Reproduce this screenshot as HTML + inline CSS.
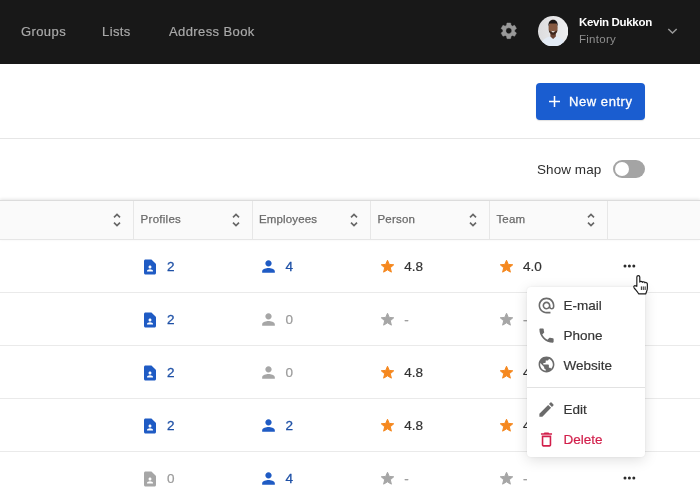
<!DOCTYPE html>
<html lang="en">
<head>
<meta charset="utf-8">
<title>Address Book</title>
<style>
*{box-sizing:border-box;margin:0;padding:0}
html,body{width:700px;height:500px;overflow:hidden;background:#fff}
body{opacity:.9999;font-family:"Liberation Sans",sans-serif;color:#333;position:relative;-webkit-font-smoothing:antialiased}
.abs{position:absolute}
.t{position:absolute;white-space:nowrap;line-height:1}
nav{position:absolute;left:0;top:0;width:700px;height:64px;background:#181818}
nav .lnk{color:#a9a9a9;font-size:13px;top:25px;letter-spacing:.4px;-webkit-text-stroke:.2px #a9a9a9}
.btn{position:absolute;left:536px;top:83px;width:109px;height:37px;background:#1a5dd0;border-radius:4px;box-shadow:0 1px 1px rgba(0,0,0,.12)}
.btn span{position:absolute;color:#fff;font-size:13px;line-height:1;left:33px;top:11.500px;letter-spacing:.56px;white-space:nowrap;-webkit-text-stroke:.3px #fff}
.hr{position:absolute;left:0;width:700px;height:1px;background:#e6e6e6}
.thead{position:absolute;left:0;top:200px;width:700px;height:40px;background:#fafafa;border-top:1px solid #dcdcdc;border-bottom:1px solid #e6e6e6;box-shadow:0 -1px 3px rgba(0,0,0,.10)}
.vs{position:absolute;top:201px;width:1px;height:38px;background:#e7e7e7}
.th{color:#6a6a6a;font-size:11.5px;top:214.300px;letter-spacing:.15px;-webkit-text-stroke:.25px #6a6a6a}
.num{font-size:13.5px;color:#1f51a6;-webkit-text-stroke:.3px #1f51a6}
.num.g{color:#9a9a9a;-webkit-text-stroke:.2px #9a9a9a}
.num.d{color:#333;-webkit-text-stroke:.2px #333}
.menu{position:absolute;left:526.500px;top:287px;width:118.500px;height:170.400px;background:#fff;border-radius:4px;box-shadow:0 3px 14px rgba(0,0,0,.13),0 0 2px rgba(0,0,0,.08)}
.mi{font-size:13.5px;color:#363636;left:37px;letter-spacing:0;-webkit-text-stroke:.2px currentColor}
</style>
</head>
<body>
<nav>
  <span class="t lnk" style="left:21px">Groups</span>
  <span class="t lnk" style="left:102px">Lists</span>
  <span class="t lnk" style="left:169px">Address Book</span>
  <svg class="abs" style="left:498.700px;top:21.300px" width="19.600" height="19.600" viewBox="0 0 24 24"><path fill="#999" stroke="#999" stroke-width=".5" d="M19.14 12.94c.04-.3.06-.61.06-.94 0-.32-.02-.64-.07-.94l2.03-1.58a.49.49 0 0 0 .12-.61l-1.92-3.32a.488.488 0 0 0-.59-.22l-2.39.96c-.5-.38-1.03-.7-1.62-.94l-.36-2.54a.484.484 0 0 0-.48-.41h-3.84c-.24 0-.43.17-.47.41l-.36 2.54c-.59.24-1.13.57-1.62.94l-2.39-.96c-.22-.08-.47 0-.59.22L2.74 8.87c-.12.21-.08.47.12.61l2.03 1.58c-.05.3-.09.63-.09.94s.02.64.07.94l-2.03 1.58a.49.49 0 0 0-.12.61l1.92 3.32c.12.22.37.29.59.22l2.39-.96c.5.38 1.03.7 1.62.94l.36 2.54c.05.24.24.41.48.41h3.84c.24 0 .44-.17.47-.41l.36-2.54c.59-.24 1.13-.56 1.62-.94l2.39.96c.22.08.47 0 .59-.22l1.92-3.32c.12-.22.07-.47-.12-.61l-2.01-1.58zM12 15.6c-1.98 0-3.600-1.62-3.600-3.600s1.620-3.600 3.600-3.600 3.600 1.620 3.600 3.600-1.620 3.600-3.600 3.600z"/></svg>
  <svg class="abs" style="left:538px;top:16px" width="30.400" height="30.400" viewBox="0 0 30 30">
    <defs><clipPath id="av"><circle cx="15" cy="15" r="15"/></clipPath>
    <linearGradient id="avbg" x1="0" x2="1"><stop offset="0" stop-color="#dcdcde"/><stop offset="1" stop-color="#efeff0"/></linearGradient>
    <filter id="avb" x="-10%" y="-10%" width="120%" height="120%"><feGaussianBlur stdDeviation=".45"/></filter></defs>
    <g clip-path="url(#av)">
      <rect width="30" height="30" fill="url(#avbg)"/>
      <g filter="url(#avb)">
      <path d="M2.500 31c.3-6 3.500-9.300 8.500-10.600l3.900-1.800 3.900 1.800c5 1.300 8.200 4.600 8.500 10.600z" fill="#e3ebf5"/>
      <path d="M12.200 17h5.400v3.200l-2.700 2.600-2.700-2.600z" fill="#6a4232"/>
      <ellipse cx="14.900" cy="11.600" rx="4.500" ry="6.300" fill="#85583f"/>
      <path d="M10.500 13c.2 3.600 2 5.400 4.400 5.400s4.200-1.800 4.400-5.400c-.7 1.500-1.400 2.100-2.100 2.200-1.100-.5-3.500-.5-4.600 0-.7-.1-1.400-.7-2.100-2.200z" fill="#3c261d"/>
      <path d="M10.300 10.800c-.4-4.600 1.600-7 4.600-7s5 2.400 4.600 7c-.3-2-.8-3-1.600-3.500-1 .3-5 .3-6 0-.8.500-1.300 1.500-1.600 3.500z" fill="#1b1412"/>
      <path d="M13.100 14.500q1.800.9 3.600 0q-.4 1.700-1.800 1.700t-1.800-1.700z" fill="#efe6e2"/>
      </g>
    </g>
  </svg>
  <span class="t" style="left:579px;top:16.900px;color:#fff;font-weight:bold;font-size:11.500px;letter-spacing:-.32px">Kevin Dukkon</span>
  <span class="t" style="left:579px;top:34.100px;color:#8e8e8e;font-size:11.500px;letter-spacing:.27px">Fintory</span>
  <svg class="abs" style="left:667.200px;top:27.200px" width="11" height="8" viewBox="0 0 11 8"><path d="M1.300 2l4.200 4 4.200-4" fill="none" stroke="#9a9a9a" stroke-width="1.500"/></svg>
</nav>

<div class="btn"><svg class="abs" style="left:13px;top:13px" width="11" height="11" viewBox="0 0 11 11"><path d="M5.500 0v11M0 5.500h11" stroke="#fff" stroke-width="1.500"/></svg><span>New entry</span></div>
<div class="hr" style="top:138px"></div>

<span class="t" style="left:537px;top:162.600px;font-size:13.500px;color:#2e2e2e;letter-spacing:.06px">Show map</span>
<div class="abs" style="left:613px;top:160px;width:32px;height:18px;border-radius:9px;background:#a4a4a4"></div>
<div class="abs" style="left:615px;top:162px;width:14px;height:14px;border-radius:7px;background:#fff"></div>

<div class="thead"></div>
<div class="vs" style="left:133px"></div>
<div class="vs" style="left:252px"></div>
<div class="vs" style="left:370px"></div>
<div class="vs" style="left:489px"></div>
<div class="vs" style="left:607px"></div>
<span class="t th" style="left:140.600px;letter-spacing:.27px">Profiles</span>
<span class="t th" style="left:259px;letter-spacing:.13px">Employees</span>
<span class="t th" style="left:377.500px;letter-spacing:.2px">Person</span>
<span class="t th" style="left:496.500px;letter-spacing:.12px">Team</span>
<div id="sorts">
<svg class="abs" style="left:111.6px;top:212.200px" width="10" height="16" viewBox="0 0 10 16"><path d="M2 5.300L5 2.400 8 5.300M2 10.700L5 13.600 8 10.700" fill="none" stroke="#666" stroke-width="1.650"/></svg>
<svg class="abs" style="left:230.6px;top:212.200px" width="10" height="16" viewBox="0 0 10 16"><path d="M2 5.300L5 2.400 8 5.300M2 10.700L5 13.600 8 10.700" fill="none" stroke="#666" stroke-width="1.650"/></svg>
<svg class="abs" style="left:348.6px;top:212.200px" width="10" height="16" viewBox="0 0 10 16"><path d="M2 5.300L5 2.400 8 5.300M2 10.700L5 13.600 8 10.700" fill="none" stroke="#666" stroke-width="1.650"/></svg>
<svg class="abs" style="left:467.6px;top:212.200px" width="10" height="16" viewBox="0 0 10 16"><path d="M2 5.300L5 2.400 8 5.300M2 10.700L5 13.600 8 10.700" fill="none" stroke="#666" stroke-width="1.650"/></svg>
<svg class="abs" style="left:585.6px;top:212.200px" width="10" height="16" viewBox="0 0 10 16"><path d="M2 5.300L5 2.400 8 5.300M2 10.700L5 13.600 8 10.700" fill="none" stroke="#666" stroke-width="1.650"/></svg>
</div><!--/sorts-->

<div class="hr" style="top:292.200px;background:#eaeaea"></div>
<div class="hr" style="top:345.250px;background:#eaeaea"></div>
<div class="hr" style="top:398.300px;background:#eaeaea"></div>
<div class="hr" style="top:451.350px;background:#eaeaea"></div>

<div id="rows">
<svg class="abs" style="left:140.7px;top:257.5px" width="18" height="18" viewBox="0 0 24 24"><path fill="#1f5bc4" d="M13.17 2H6c-1.100 0-2 .9-2 2v16c0 1.100.9 2 2 2h12c1.100 0 2-.9 2-2V8.830c0-.53-.21-1.040-.59-1.410l-4.830-4.830c-.37-.38-.88-.59-1.410-.59zM12 10c1.100 0 2 .9 2 2s-.9 2-2 2-2-.9-2-2 .9-2 2-2zm4 8H8v-.57c0-.81.48-1.530 1.220-1.850a6.950 6.950 0 0 1 5.560 0A2.010 2.010 0 0 1 16 17.430V18z"/></svg>
<span class="t num" style="left:167px;top:260px">2</span>
<svg class="abs" style="left:259px;top:256.9px" width="19" height="19" viewBox="0 0 24 24"><path fill="#1f5bc4" d="M12 12c2.210 0 4-1.790 4-4s-1.790-4-4-4-4 1.790-4 4 1.790 4 4 4zm0 2c-2.670 0-8 1.340-8 4v2h16v-2c0-2.660-5.330-4-8-4z"/></svg>
<span class="t num" style="left:285.500px;top:260px">4</span>
<svg class="abs" style="left:380px;top:259.2px" width="15" height="15" viewBox="0 0 24 24"><path fill="#f5881f" stroke="#f5881f" stroke-width="1.600" stroke-linejoin="round" d="M12 17.270L18.180 21l-1.640-7.030L22 9.240l-7.190-.61L12 2 9.190 8.630 2 9.240l5.460 4.730L5.820 21z"/></svg>
<span class="t num d" style="left:404.3px;top:260px">4.8</span>
<svg class="abs" style="left:498.7px;top:259.2px" width="15" height="15" viewBox="0 0 24 24"><path fill="#f5881f" stroke="#f5881f" stroke-width="1.600" stroke-linejoin="round" d="M12 17.270L18.180 21l-1.640-7.030L22 9.240l-7.190-.61L12 2 9.190 8.630 2 9.240l5.460 4.730L5.820 21z"/></svg>
<span class="t num d" style="left:523px;top:260px">4.0</span>
<svg class="abs" style="left:623.200px;top:264.2px" width="13" height="4" viewBox="0 0 13 4"><circle cx="2" cy="2" r="1.500" fill="#2b2b2b"/><circle cx="6.400" cy="2" r="1.500" fill="#2b2b2b"/><circle cx="10.800" cy="2" r="1.500" fill="#2b2b2b"/></svg>
<svg class="abs" style="left:140.7px;top:310.5px" width="18" height="18" viewBox="0 0 24 24"><path fill="#1f5bc4" d="M13.17 2H6c-1.100 0-2 .9-2 2v16c0 1.100.9 2 2 2h12c1.100 0 2-.9 2-2V8.830c0-.53-.21-1.040-.59-1.410l-4.830-4.830c-.37-.38-.88-.59-1.410-.59zM12 10c1.100 0 2 .9 2 2s-.9 2-2 2-2-.9-2-2 .9-2 2-2zm4 8H8v-.57c0-.81.48-1.530 1.220-1.850a6.950 6.950 0 0 1 5.560 0A2.010 2.010 0 0 1 16 17.430V18z"/></svg>
<span class="t num" style="left:167px;top:313px">2</span>
<svg class="abs" style="left:259px;top:309.9px" width="19" height="19" viewBox="0 0 24 24"><path fill="#a6a6a6" d="M12 12c2.210 0 4-1.790 4-4s-1.790-4-4-4-4 1.790-4 4 1.790 4 4 4zm0 2c-2.670 0-8 1.340-8 4v2h16v-2c0-2.660-5.330-4-8-4z"/></svg>
<span class="t num g" style="left:285.500px;top:313px">0</span>
<svg class="abs" style="left:380px;top:312.2px" width="15" height="15" viewBox="0 0 24 24"><path fill="#a6a6a6" stroke="#a6a6a6" stroke-width="1.600" stroke-linejoin="round" d="M12 17.270L18.180 21l-1.640-7.030L22 9.240l-7.190-.61L12 2 9.190 8.630 2 9.240l5.460 4.730L5.820 21z"/></svg>
<span class="t num g" style="left:404.3px;top:313px">-</span>
<svg class="abs" style="left:498.7px;top:312.2px" width="15" height="15" viewBox="0 0 24 24"><path fill="#a6a6a6" stroke="#a6a6a6" stroke-width="1.600" stroke-linejoin="round" d="M12 17.270L18.180 21l-1.640-7.030L22 9.240l-7.190-.61L12 2 9.190 8.630 2 9.240l5.460 4.730L5.820 21z"/></svg>
<span class="t num g" style="left:523px;top:313px">-</span>
<svg class="abs" style="left:140.7px;top:363.5px" width="18" height="18" viewBox="0 0 24 24"><path fill="#1f5bc4" d="M13.17 2H6c-1.100 0-2 .9-2 2v16c0 1.100.9 2 2 2h12c1.100 0 2-.9 2-2V8.830c0-.53-.21-1.040-.59-1.410l-4.830-4.830c-.37-.38-.88-.59-1.410-.59zM12 10c1.100 0 2 .9 2 2s-.9 2-2 2-2-.9-2-2 .9-2 2-2zm4 8H8v-.57c0-.81.48-1.530 1.220-1.850a6.950 6.950 0 0 1 5.560 0A2.010 2.010 0 0 1 16 17.430V18z"/></svg>
<span class="t num" style="left:167px;top:366px">2</span>
<svg class="abs" style="left:259px;top:362.9px" width="19" height="19" viewBox="0 0 24 24"><path fill="#a6a6a6" d="M12 12c2.210 0 4-1.790 4-4s-1.790-4-4-4-4 1.790-4 4 1.790 4 4 4zm0 2c-2.670 0-8 1.340-8 4v2h16v-2c0-2.660-5.330-4-8-4z"/></svg>
<span class="t num g" style="left:285.500px;top:366px">0</span>
<svg class="abs" style="left:380px;top:365.2px" width="15" height="15" viewBox="0 0 24 24"><path fill="#f5881f" stroke="#f5881f" stroke-width="1.600" stroke-linejoin="round" d="M12 17.270L18.180 21l-1.640-7.030L22 9.240l-7.190-.61L12 2 9.190 8.630 2 9.240l5.460 4.730L5.820 21z"/></svg>
<span class="t num d" style="left:404.3px;top:366px">4.8</span>
<svg class="abs" style="left:498.7px;top:365.2px" width="15" height="15" viewBox="0 0 24 24"><path fill="#f5881f" stroke="#f5881f" stroke-width="1.600" stroke-linejoin="round" d="M12 17.270L18.180 21l-1.640-7.030L22 9.240l-7.190-.61L12 2 9.190 8.630 2 9.240l5.460 4.730L5.820 21z"/></svg>
<span class="t num d" style="left:523px;top:366px">4.0</span>
<svg class="abs" style="left:140.7px;top:416.5px" width="18" height="18" viewBox="0 0 24 24"><path fill="#1f5bc4" d="M13.17 2H6c-1.100 0-2 .9-2 2v16c0 1.100.9 2 2 2h12c1.100 0 2-.9 2-2V8.830c0-.53-.21-1.040-.59-1.410l-4.830-4.830c-.37-.38-.88-.59-1.410-.59zM12 10c1.100 0 2 .9 2 2s-.9 2-2 2-2-.9-2-2 .9-2 2-2zm4 8H8v-.57c0-.81.48-1.530 1.220-1.850a6.950 6.950 0 0 1 5.560 0A2.010 2.010 0 0 1 16 17.430V18z"/></svg>
<span class="t num" style="left:167px;top:419px">2</span>
<svg class="abs" style="left:259px;top:415.9px" width="19" height="19" viewBox="0 0 24 24"><path fill="#1f5bc4" d="M12 12c2.210 0 4-1.790 4-4s-1.790-4-4-4-4 1.790-4 4 1.790 4 4 4zm0 2c-2.670 0-8 1.340-8 4v2h16v-2c0-2.660-5.330-4-8-4z"/></svg>
<span class="t num" style="left:285.500px;top:419px">2</span>
<svg class="abs" style="left:380px;top:418.2px" width="15" height="15" viewBox="0 0 24 24"><path fill="#f5881f" stroke="#f5881f" stroke-width="1.600" stroke-linejoin="round" d="M12 17.270L18.180 21l-1.640-7.030L22 9.240l-7.190-.61L12 2 9.190 8.630 2 9.240l5.460 4.730L5.820 21z"/></svg>
<span class="t num d" style="left:404.3px;top:419px">4.8</span>
<svg class="abs" style="left:498.7px;top:418.2px" width="15" height="15" viewBox="0 0 24 24"><path fill="#f5881f" stroke="#f5881f" stroke-width="1.600" stroke-linejoin="round" d="M12 17.270L18.180 21l-1.640-7.030L22 9.240l-7.190-.61L12 2 9.190 8.630 2 9.240l5.460 4.730L5.820 21z"/></svg>
<span class="t num d" style="left:523px;top:419px">4.0</span>
<svg class="abs" style="left:140.7px;top:469.5px" width="18" height="18" viewBox="0 0 24 24"><path fill="#a6a6a6" d="M13.17 2H6c-1.100 0-2 .9-2 2v16c0 1.100.9 2 2 2h12c1.100 0 2-.9 2-2V8.830c0-.53-.21-1.040-.59-1.410l-4.830-4.830c-.37-.38-.88-.59-1.410-.59zM12 10c1.100 0 2 .9 2 2s-.9 2-2 2-2-.9-2-2 .9-2 2-2zm4 8H8v-.57c0-.81.48-1.530 1.220-1.850a6.950 6.950 0 0 1 5.560 0A2.010 2.010 0 0 1 16 17.430V18z"/></svg>
<span class="t num g" style="left:167px;top:472px">0</span>
<svg class="abs" style="left:259px;top:468.9px" width="19" height="19" viewBox="0 0 24 24"><path fill="#1f5bc4" d="M12 12c2.210 0 4-1.790 4-4s-1.790-4-4-4-4 1.790-4 4 1.790 4 4 4zm0 2c-2.670 0-8 1.340-8 4v2h16v-2c0-2.660-5.330-4-8-4z"/></svg>
<span class="t num" style="left:285.500px;top:472px">4</span>
<svg class="abs" style="left:380px;top:471.2px" width="15" height="15" viewBox="0 0 24 24"><path fill="#a6a6a6" stroke="#a6a6a6" stroke-width="1.600" stroke-linejoin="round" d="M12 17.270L18.180 21l-1.640-7.030L22 9.240l-7.190-.61L12 2 9.190 8.630 2 9.240l5.460 4.730L5.820 21z"/></svg>
<span class="t num g" style="left:404.3px;top:472px">-</span>
<svg class="abs" style="left:498.7px;top:471.2px" width="15" height="15" viewBox="0 0 24 24"><path fill="#a6a6a6" stroke="#a6a6a6" stroke-width="1.600" stroke-linejoin="round" d="M12 17.270L18.180 21l-1.640-7.030L22 9.240l-7.190-.61L12 2 9.190 8.630 2 9.240l5.460 4.730L5.820 21z"/></svg>
<span class="t num g" style="left:523px;top:472px">-</span>
<svg class="abs" style="left:623.200px;top:476.2px" width="13" height="4" viewBox="0 0 13 4"><circle cx="2" cy="2" r="1.500" fill="#2b2b2b"/><circle cx="6.400" cy="2" r="1.500" fill="#2b2b2b"/><circle cx="10.800" cy="2" r="1.500" fill="#2b2b2b"/></svg>
</div><!--/rows-->

<div class="menu">
<svg class="abs" style="left:10.7px;top:9px" width="19" height="19" viewBox="0 0 24 24"><path fill="#6b6b6b" d="M12 2C6.480 2 2 6.480 2 12s4.480 10 10 10h5v-2h-5c-4.340 0-8-3.660-8-8s3.660-8 8-8 8 3.660 8 8v1.430c0 .79-.71 1.570-1.500 1.570s-1.500-.78-1.500-1.570V12c0-2.760-2.240-5-5-5s-5 2.240-5 5 2.240 5 5 5c1.380 0 2.640-.56 3.540-1.470.65.89 1.770 1.470 2.960 1.470 1.970 0 3.500-1.600 3.500-3.570V12c0-5.520-4.480-10-10-10zm0 13c-1.660 0-3-1.340-3-3s1.340-3 3-3 3 1.340 3 3-1.340 3-3 3z"/></svg>
<svg class="abs" style="left:10.7px;top:38.9px" width="19" height="19" viewBox="0 0 24 24"><path fill="#6b6b6b" d="M6.620 10.790c1.440 2.830 3.760 5.140 6.590 6.590l2.200-2.200c.27-.27.67-.36 1.020-.24 1.120.37 2.330.57 3.570.57.55 0 1 .45 1 1V20c0 .55-.45 1-1 1-9.390 0-17-7.610-17-17 0-.55.45-1 1-1h3.500c.55 0 1 .45 1 1 0 1.250.2 2.450.57 3.570.11.35.03.74-.25 1.020l-2.200 2.200z"/></svg>
<svg class="abs" style="left:10.6px;top:68.2px" width="19" height="19" viewBox="0 0 24 24"><path fill="#6b6b6b" d="M12 2C6.480 2 2 6.480 2 12s4.480 10 10 10 10-4.480 10-10S17.520 2 12 2zm-1 17.930c-3.950-.49-7-3.850-7-7.930 0-.62.080-1.210.21-1.790L9 15v1c0 1.100.9 2 2 2v1.930zm6.900-2.540c-.26-.81-1-1.390-1.900-1.390h-1v-3c0-.55-.45-1-1-1H8v-2h2c.55 0 1-.45 1-1V7h2c1.100 0 2-.9 2-2v-.41c2.930 1.190 5 4.060 5 7.410 0 2.080-.8 3.970-2.100 5.390z"/></svg>
<svg class="abs" style="left:10.7px;top:113.2px" width="19" height="19" viewBox="0 0 24 24"><path fill="#6b6b6b" d="M3 17.250V21h3.750L17.810 9.940l-3.750-3.750L3 17.250zM20.710 7.040a.996.996 0 0 0 0-1.410l-2.340-2.340a.996.996 0 0 0-1.410 0l-1.830 1.830 3.750 3.750 1.830-1.830z"/></svg>
<svg class="abs" style="left:10.9px;top:142.9px" width="19" height="19" viewBox="0 0 24 24"><path fill="#d21f4b" d="M6 19c0 1.100.9 2 2 2h8c1.100 0 2-.9 2-2V7H6v12zM8 9h8v10H8V9zm7.500-5l-1-1h-5l-1 1H5v2h14V4h-3.500z"/></svg>
  <span class="t mi" style="top:12.100px">E-mail</span>
  <span class="t mi" style="top:42.300px">Phone</span>
  <span class="t mi" style="top:72.100px">Website</span>
  <div class="abs" style="left:0;top:99.800px;width:118.500px;height:1px;background:#e2e2e2"></div>
  <span class="t mi" style="top:116.300px">Edit</span>
  <span class="t mi" style="top:146.300px;color:#d21f4b">Delete</span>
</div>
<svg class="abs" style="left:631.800px;top:274.200px" width="17.900" height="22.100" viewBox="0 0 17 21"><path d="M4.600 11.700V2.900a1.400 1.400 0 0 1 2.800 0V7.700c0-.9 2.500-.9 2.500.2 0-.8 2.400-.7 2.400.5 0-.7 2.300-.5 2.300.8v4.300c0 2.500-1.200 3.500-1.500 5.400H6.300c-.6-1.600-2.600-3.600-4.300-5.800-1-1.400.6-2.700 1.800-1.600z" fill="#fff" stroke="#1a1a1a" stroke-width="1.100" stroke-linejoin="round"/><path d="M8.900 11.800v3.400M10.700 11.800v3.400M12.500 11.800v3.400" stroke="#1a1a1a" stroke-width=".9"/></svg>
</body>
</html>
